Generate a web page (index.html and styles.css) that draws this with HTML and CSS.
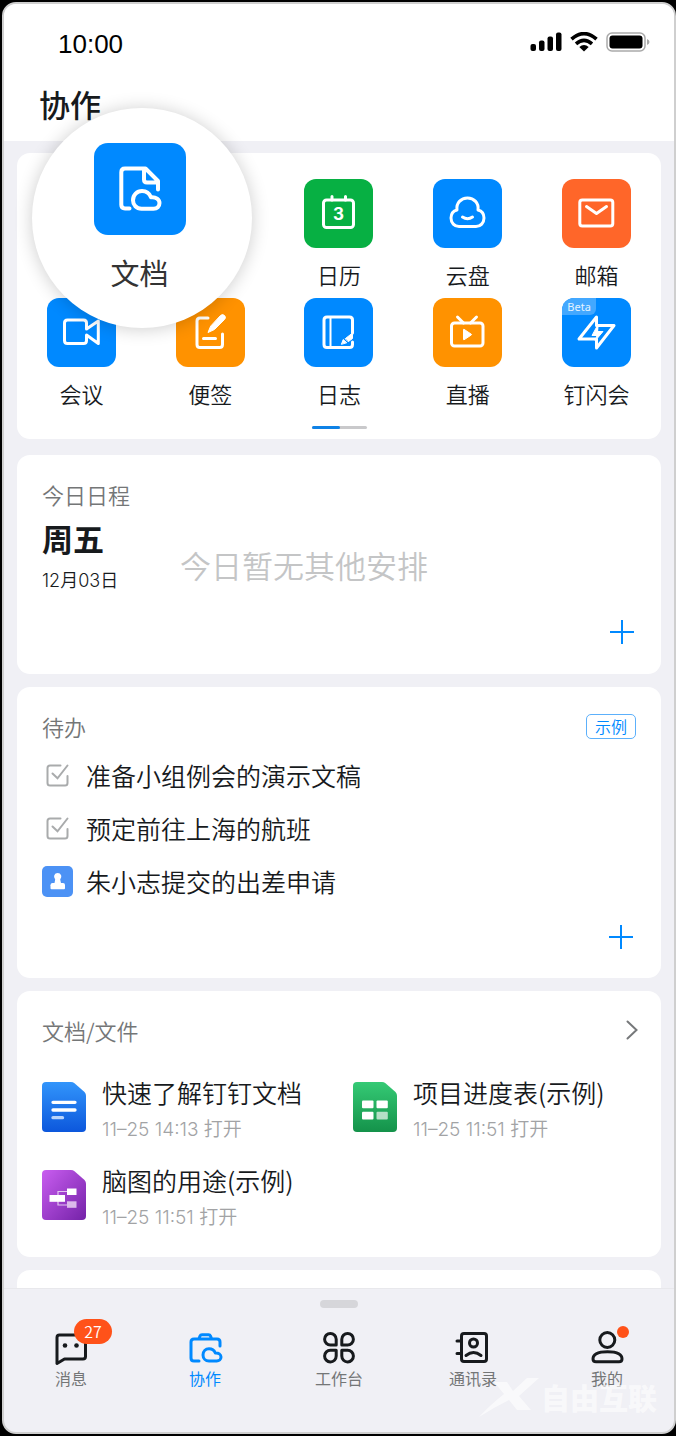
FILE: index.html
```html
<!DOCTYPE html>
<html lang="zh-CN">
<head>
<meta charset="utf-8">
<meta name="viewport" content="width=device-width, initial-scale=1">
<title>协作</title>
<link rel="stylesheet" href="styles.css">
</head>
<body>
<div class="phone">
  <header class="header">
    <div class="status">
      <time class="clock">10:00</time>
      <div class="status-icons">
        <svg width="32" height="20" viewBox="0 0 32 20"><rect x="0.500" y="12" width="5.500" height="7" rx="2"/><rect x="9" y="8.500" width="5.500" height="10.500" rx="2"/><rect x="17.500" y="4.500" width="5.500" height="14.500" rx="2"/><rect x="26" y="0.500" width="5.500" height="18.500" rx="2"/></svg>
        <svg width="28" height="20" viewBox="0 0 28 20"><g fill="none" stroke="#000" stroke-width="3.600"><path d="M1.500 7.200Q14-4 26.500 7.200"/><path d="M6 11.800Q14 4.800 22 11.800"/></g><path d="M9.300 15Q14 11 18.700 15L14 19.500Z"/></svg>
        <svg width="44" height="20" viewBox="0 0 44 20"><rect x="1" y="1" width="38" height="18" rx="5" fill="none" stroke="#aaa" stroke-width="1.500"/><rect x="3.500" y="3.500" width="33" height="13" rx="3"/><path d="M41 7Q43.500 8 43.500 10T41 13Z" fill="#aaa"/></svg>
      </div>
    </div>
    <h1 class="page-title">协作</h1>
  </header>

  <main class="content">
    <section class="card apps">
      <div class="app-grid">
        <button class="app app-third"><span class="tile green"><svg viewBox="0 0 69 69"><rect x="19.500" y="21" width="30" height="27.500" rx="3"/><path d="M28 17.500V21M41.500 17.500V21"/><text x="34.500" y="41" class="day">3</text></svg></span><span class="app-name">日历</span></button>
        <button class="app"><span class="tile blue"><svg viewBox="0 0 69 69"><path d="M24 31C23 24 28 19 34.500 19S46 24 45 31C49 32 51 35.500 51 39C51 44 47.500 47.500 43 47.500H26C21.500 47.500 18 44 18 39C18 35.500 20 32 24 31Z"/><path d="M29.500 38Q34.500 41.500 39.500 38"/></svg></span><span class="app-name">云盘</span></button>
        <button class="app"><span class="tile red"><svg viewBox="0 0 69 69"><rect x="17.800" y="21" width="33" height="26" rx="2.500"/><path d="M24.500 27.500L34.500 34.500L44.500 27.500"/></svg></span><span class="app-name">邮箱</span></button>
        <button class="app"><span class="tile blue"><svg viewBox="0 0 69 69"><path d="M39.500 31V25Q39.500 22 36.500 22H20.500Q17.500 22 17.500 25V42.500Q17.500 45.500 20.500 45.500H36.500Q39.500 45.500 39.500 42.500V37L51.300 45.500V23L39.500 31"/></svg></span><span class="app-name">会议</span></button>
        <button class="app"><span class="tile orange"><svg viewBox="0 0 69 69"><path d="M32 20H24Q21 20 21 23V46.500Q21 49.500 24 49.500H43.500Q46.500 49.500 46.500 46.500V36M27.500 40.500H39.500"/><path class="solid" d="M44.500 17.500Q46.500 15.500 48.500 17.500T48.500 21.500L38.500 31.500L32 34.500L34.500 28.500Z"/></svg></span><span class="app-name">便签</span></button>
        <button class="app"><span class="tile blue"><svg viewBox="0 0 69 69"><path d="M48.500 35V22Q48.500 19 45.500 19H23Q20 19 20 22V46.500Q20 49.500 23 49.500H45.500Q48.500 49.500 48.500 46.500V44"/><path class="thin" d="M26.500 20V49"/><path class="solid" d="M37.500 46L39.200 41.500L42.500 44.500ZM41.500 40.500L48.500 35V40.500L44.500 43.500Z"/></svg></span><span class="app-name">日志</span></button>
        <button class="app"><span class="tile orange"><svg viewBox="0 0 69 69"><rect x="18.500" y="25" width="31.500" height="23" rx="3"/><path d="M24.500 19L30.500 25M43.500 19L37.500 25"/><path class="solid" d="M30.500 31.500Q30.500 31 31 31.300L38.300 36.200Q38.800 36.600 38.300 37L31 41.800Q30.500 42 30.500 41.500Z"/></svg></span><span class="app-name">直播</span></button>
        <button class="app"><span class="tile blue"><svg viewBox="0 0 69 69"><path d="M34.500 19L17 41H34.500V50L52 27.500H34.500Z"/><path class="solid" d="M36 26.500L30 37.500H35L33 43L41 33.500H36Z"/></svg><span class="beta">Beta</span></span><span class="app-name">钉闪会</span></button>
      </div>
      <div class="pager"><span class="pager-current"></span></div>
      <button class="lens">
        <svg class="lens-tile" viewBox="0 0 92 92"><path d="M35.500 65.500H31Q27.300 65.500 27.300 61.800V29.200Q27.300 25.500 31 25.500H51.500L64 38V46.500M50 26V36.500Q50 39.500 53 39.500H63.500"/><path d="M47.500 65.700C42.500 65.700 39 62 39 57.200C39 52 43 48 48 48C52.500 48 55.500 50.500 57 54.300C62 53.800 65.500 56.500 65.500 60C65.500 63.500 63 65.700 59.500 65.700Z"/></svg>
        <span class="lens-name">文档</span>
      </button>
    </section>

    <section class="card schedule">
      <h2 class="card-title">今日日程</h2>
      <div class="day-row">
        <div class="date"><strong class="weekday">周五</strong><span class="month-day">12月03日</span></div>
        <p class="empty">今日暂无其他安排</p>
      </div>
      <button class="add" aria-label="添加日程"><svg viewBox="0 0 26 26"><path d="M13 1V25M1 13H25"/></svg></button>
    </section>

    <section class="card todo">
      <div class="card-head"><h2 class="card-title">待办</h2><span class="sample">示例</span></div>
      <ul class="todo-list">
        <li><label class="todo-item"><span class="check"><input type="checkbox" checked><svg viewBox="0 0 31 31"><path d="M18.500 5.500H8Q5.500 5.500 5.500 8V23Q5.500 25.500 8 25.500H23Q25.500 25.500 25.500 23V16M10.500 13.500L15.500 18.300L25.500 5.500"/></svg></span>准备小组例会的演示文稿</label></li>
        <li><label class="todo-item"><span class="check"><input type="checkbox" checked><svg viewBox="0 0 31 31"><path d="M18.500 5.500H8Q5.500 5.500 5.500 8V23Q5.500 25.500 8 25.500H23Q25.500 25.500 25.500 23V16M10.500 13.500L15.500 18.300L25.500 5.500"/></svg></span>预定前往上海的航班</label></li>
        <li class="todo-item"><svg class="stamp" viewBox="0 0 31 31"><path d="M15.700 7A3.700 3.700 0 0 0 13.200 13.400L12.500 17H10.500Q8.500 17 8.500 19V20H23V19Q23 17 21 17H19L18.200 13.400A3.700 3.700 0 0 0 15.700 7Z"/><rect x="8.500" y="19" width="14.500" height="4.300" rx="1"/></svg>朱小志提交的出差申请</li>
      </ul>
      <button class="add" aria-label="添加待办"><svg viewBox="0 0 26 26"><path d="M13 1V25M1 13H25"/></svg></button>
    </section>

    <section class="card docs">
      <div class="card-head"><h2 class="card-title">文档/文件</h2><button class="more" aria-label="更多"><svg viewBox="0 0 12 20"><path d="M1.500 1.500L10.500 10L1.500 18.500"/></svg></button></div>
      <div class="doc-grid">
        <a class="doc" href="#">
          <svg class="file" viewBox="0 0 44 50"><defs><linearGradient id="fb" x1="0" y1="0" x2="0" y2="1"><stop offset="0" stop-color="#3295fb"/><stop offset="1" stop-color="#0c57dc"/></linearGradient></defs><path fill="url(#fb)" d="M4 0H29Q31 0 32.500 1.300L42.500 10Q44 11.500 44 13.500V46Q44 50 40 50H4Q0 50 0 46V4Q0 0 4 0Z"/><path stroke="#fff" stroke-width="3.300" stroke-linecap="round" d="M11 20.300H33M11 28H33"/><path stroke="#b9d4fb" stroke-width="3.300" stroke-linecap="round" d="M11 35.700H20.500"/></svg>
          <span class="doc-text"><span class="doc-name">快速了解钉钉文档</span><span class="doc-meta">11–25 14:13 打开</span></span>
        </a>
        <a class="doc" href="#">
          <svg class="file" viewBox="0 0 44 50"><defs><linearGradient id="fg" x1="0" y1="0" x2="0" y2="1"><stop offset="0" stop-color="#35ca75"/><stop offset="1" stop-color="#14924a"/></linearGradient></defs><path fill="url(#fg)" d="M4 0H29Q31 0 32.500 1.300L42.500 10Q44 11.500 44 13.500V46Q44 50 40 50H4Q0 50 0 46V4Q0 0 4 0Z"/><g fill="#fff"><rect x="9" y="18.500" width="11.500" height="7.800" rx="1"/><rect x="23.500" y="18.500" width="11.300" height="7.800" rx="1"/><rect x="9" y="29.700" width="11.500" height="7.800" rx="1"/><rect x="23.500" y="29.700" width="11.300" height="7.800" rx="1" fill="#b5dfc6"/></g></svg>
          <span class="doc-text"><span class="doc-name">项目进度表(示例)</span><span class="doc-meta">11–25 11:51 打开</span></span>
        </a>
        <a class="doc" href="#">
          <svg class="file" viewBox="0 0 44 50"><defs><linearGradient id="fp" x1="0" y1="0" x2="1" y2="1"><stop offset="0" stop-color="#c95df0"/><stop offset="1" stop-color="#7422a8"/></linearGradient></defs><path fill="url(#fp)" d="M4 0H29Q31 0 32.500 1.300L42.500 10Q44 11.500 44 13.500V46Q44 50 40 50H4Q0 50 0 46V4Q0 0 4 0Z"/><path fill="none" stroke="#e4c5f2" stroke-width="1.200" d="M25 21.500H16V35H25"/><g fill="#fff"><rect x="7.500" y="25" width="15.500" height="6.800"/><rect x="25" y="18.500" width="9.500" height="6.500"/><rect x="25" y="31.300" width="9.500" height="6.500" fill="#dcb9eb"/></g></svg>
          <span class="doc-text"><span class="doc-name">脑图的用途(示例)</span><span class="doc-meta">11–25 11:51 打开</span></span>
        </a>
      </div>
    </section>

    <section class="card peek"></section>
  </main>

  <nav class="tabbar">
    <div class="handle"></div>
    <div class="tabs">
      <button class="tab"><span class="tab-icon"><svg viewBox="0 0 34 34"><path d="M3 32.500V6.500Q3 4 5.500 4H29Q31.500 4 31.500 6.500V25.500Q31.500 28 29 28H10.500Z"/><g class="dots"><circle cx="11" cy="14.500" r="2.300"/><circle cx="22.500" cy="14.500" r="2.300"/></g></svg><span class="count">27</span></span><span class="tab-name">消息</span></button>
      <button class="tab current"><span class="tab-icon"><svg viewBox="0 0 34 34"><path d="M11 30H6Q3 30 3 27V11Q3 8 6 8H29Q32 8 32 11V15M11 7.500L12 5Q12.500 3.700 14 3.700H20.500Q22 3.700 22.500 5L23.500 7.500"/><path d="M21 30C17.500 30 15 27.300 15 24C15 20.500 17.500 17.800 21 17.800C24.300 17.800 26.300 19.700 27.300 22C30.500 21.700 33 23.300 33 26C33 28.500 31 30 28.700 30Z"/></svg></span><span class="tab-name">协作</span></button>
      <button class="tab"><span class="tab-icon"><svg viewBox="0 0 34 34"><path d="M14.200 14H8.500A5.800 5.800 0 1 1 14.200 8.200ZM19.800 14H25.500A5.800 5.800 0 1 0 19.800 8.200ZM14.200 19.300H8.500A5.800 5.800 0 1 0 14.200 25.100ZM19.800 19.300H25.500A5.800 5.800 0 1 1 19.800 25.100Z"/></svg></span><span class="tab-name">工作台</span></button>
      <button class="tab"><span class="tab-icon"><svg viewBox="0 0 34 34"><rect x="5.500" y="2.500" width="25" height="28" rx="2.500"/><circle cx="17.500" cy="12" r="4"/><path d="M1 10H5.500M1 22.500H5.500M10 24.500Q17.500 18.500 25 24.500"/></svg></span><span class="tab-name">通讯录</span></button>
      <button class="tab"><span class="tab-icon"><svg viewBox="0 0 34 34"><circle cx="17.300" cy="9" r="7.500"/><path d="M3 28Q3 20.800 17.500 20.800T32 28Q32 30.700 29 30.700H6Q3 30.700 3 28Z"/></svg><span class="unread"></span></span><span class="tab-name">我的</span></button>
    </div>
    <div class="watermark"><svg viewBox="0 0 64 42"><path d="M17 6H30L36 15L50 2H62L42 20L54 34H40L32 24Q16 32 2 41Q12 30 27 18Z"/></svg><span>自由互联</span></div>
  </nav>
</div>
</body>
</html>
```
FILE: styles.css
```css
* {
  box-sizing: border-box;
}

body {
  margin: 0;
  padding: 2px 0 2px 2px;
  background: #000;
  color: #171a1d;
  font-family: "Noto Sans CJK SC", sans-serif;
  font-weight: 350;
}

h1, h2, p, ul {
  margin: 0;
  padding: 0;
}

button {
  padding: 0;
  border: 0;
  background: none;
  color: inherit;
  font-family: inherit;
  font-weight: inherit;
  cursor: pointer;
}

svg {
  display: block;
}

.phone {
  display: flex;
  flex-direction: column;
  min-height: calc(100vh - 4px);
  border: 2px solid #cfcfcf;
  border-radius: 14px;
  background: #f0f0f5;
  overflow: hidden;
}

/* Header */
.header {
  padding: 24px 24px 15px 35px;
  background: #fff;
}

.status {
  display: flex;
  justify-content: space-between;
  align-items: center;
  height: 32px;
  padding-left: 19px;
}

.clock {
  color: #000;
  font-family: "Liberation Sans", sans-serif;
  font-size: 26px;
  font-weight: 400;
  line-height: 32px;
}

.status-icons {
  display: flex;
  gap: 8px;
  padding-bottom: 4px;
}

.page-title {
  margin-top: 22px;
  font-size: 31px;
  font-weight: 500;
  line-height: 44px;
}

/* Cards */
.content {
  display: flex;
  flex: 1;
  flex-direction: column;
  gap: 13px;
  padding: 12px 13px 0;
}

.card {
  padding: 23px 25px 25px;
  border-radius: 13px;
  background: #fff;
}

.card-head {
  display: flex;
  justify-content: space-between;
  align-items: center;
}

.card-title {
  color: #747677;
  font-size: 22px;
  font-weight: 350;
  line-height: 32px;
}

.add {
  display: block;
  width: 26px;
  height: 26px;
  margin: 0 1px 0 auto;
}

.add path {
  stroke: #0089ff;
  stroke-width: 2;
}

/* App launcher */
.apps {
  position: relative;
  margin-bottom: 3px;
  padding: 26px 0 10px;
}

.app-grid {
  display: grid;
  grid-template-columns: repeat(5, 1fr);
  row-gap: 8px;
}

.app {
  display: flex;
  flex-direction: column;
  align-items: center;
  gap: 10px;
}

.app-third {
  grid-column-start: 3;
}

.tile {
  position: relative;
  width: 69px;
  height: 69px;
  border-radius: 12px;
  overflow: hidden;
}

.tile svg,
.lens-tile {
  fill: none;
  stroke: #fff;
  stroke-width: 3;
  stroke-linecap: round;
  stroke-linejoin: round;
}

.tile .solid {
  fill: #fff;
  stroke-width: 1;
}

.tile .thin {
  stroke-width: 2;
}

.tile .day {
  fill: #fff;
  stroke: none;
  font-family: Inter, sans-serif;
  font-size: 17px;
  font-weight: 700;
  text-anchor: middle;
}

.green { background: #07b043; }
.blue { background: #0089ff; }
.red { background: #ff6629; }
.orange { background: #ff9200; }

.beta {
  position: absolute;
  top: 0;
  left: 0;
  width: 34px;
  height: 17px;
  border-bottom-right-radius: 6px;
  background: #43a8ff;
  color: #e4f3ff;
  font-family: "Noto Sans", sans-serif;
  font-size: 11px;
  font-weight: 400;
  line-height: 17px;
  text-align: center;
}

.app-name {
  font-size: 22px;
  line-height: 32px;
}

.pager {
  width: 55px;
  height: 3px;
  margin: 17px auto 0;
  border-radius: 2px;
  background: #c9c9cb;
}

.pager-current {
  display: block;
  width: 28px;
  height: 3px;
  border-radius: 2px;
  background: #0f82e6;
}

.lens {
  position: absolute;
  top: -45px;
  left: 15px;
  display: flex;
  flex-direction: column;
  align-items: center;
  gap: 17px;
  width: 220px;
  height: 220px;
  padding: 35px 5px 0 0;
  border-radius: 50%;
  background: #fff;
  box-shadow: 0 1px 18px rgba(0, 0, 0, 0.2);
}

.lens-tile {
  width: 92px;
  height: 92px;
  border-radius: 14px;
  background: #0089ff;
  stroke-width: 4;
}

.lens-name {
  color: #333;
  font-size: 29px;
  font-weight: 400;
  line-height: 40px;
}

/* Schedule */
.schedule {
  padding-bottom: 29px;
}

.day-row {
  display: flex;
  align-items: flex-end;
  margin-top: 6px;
}

.date {
  display: flex;
  flex-direction: column;
  gap: 7px;
  width: 138px;
}

.weekday {
  font-size: 31px;
  font-weight: 700;
  line-height: 44px;
}

.month-day {
  font-family: Inter, "Noto Sans CJK SC", sans-serif;
  font-size: 18px;
  line-height: 28px;
}

.empty {
  color: #c4c5c6;
  font-size: 31px;
  line-height: 60px;
}

.schedule .add {
  margin-top: 24px;
}

/* To-do */
.todo {
  padding-bottom: 28px;
}

.sample {
  padding: 0 8px;
  border: 1px solid #5cb0fb;
  border-radius: 5px;
  color: #0089ff;
  font-size: 16px;
  line-height: 23px;
}

.todo-list {
  margin-top: 7px;
  list-style: none;
}

.todo-item {
  display: flex;
  align-items: center;
  gap: 13px;
  font-size: 25px;
  line-height: 53px;
}

.check {
  display: grid;
  width: 31px;
  height: 31px;
}

.check > * {
  grid-area: 1 / 1;
}

.check input {
  width: 31px;
  height: 31px;
  margin: 0;
  appearance: none;
}

.check svg {
  fill: none;
  stroke: #a9abac;
  stroke-width: 2;
  stroke-linecap: round;
  pointer-events: none;
}

.stamp {
  width: 31px;
  height: 31px;
  border-radius: 5px;
  background: #4c92f5;
  fill: #fff;
}

.todo .add {
  margin-top: 16px;
  margin-right: 2px;
}

/* Documents */
.docs {
  padding-right: 23px;
}

.more {
  width: 12px;
  height: 20px;
}

.more path {
  fill: none;
  stroke: #76787a;
  stroke-width: 2;
  stroke-linecap: round;
}

.doc-grid {
  display: grid;
  grid-template-columns: 1fr 1fr;
  gap: 18px 26px;
  margin-top: 28px;
}

.doc {
  display: flex;
  gap: 16px;
  color: inherit;
  text-decoration: none;
}

.file {
  flex: none;
  width: 44px;
  height: 50px;
  margin-top: 8px;
}

.doc-text {
  display: flex;
  flex-direction: column;
  gap: 6px;
  white-space: nowrap;
}

.doc-name {
  font-size: 25px;
  line-height: 36px;
}

.doc-meta {
  color: #a2a3a5;
  font-family: Inter, "Noto Sans CJK SC", sans-serif;
  font-size: 19px;
  line-height: 28px;
}

.peek {
  flex: 1;
  min-height: 18px;
  padding: 0;
  border-radius: 13px 13px 0 0;
}

/* Tab bar */
.tabbar {
  position: relative;
  padding: 11px 0 42px;
  border-top: 1px solid #e8e8ec;
}

.handle {
  width: 38px;
  height: 8px;
  margin: 0 auto 23px;
  border-radius: 4px;
  background: #d6d6da;
}

.tabs {
  display: grid;
  grid-template-columns: repeat(5, 1fr);
}

.tab {
  display: flex;
  flex-direction: column;
  align-items: center;
  gap: 1px;
}

.tab-icon {
  position: relative;
  width: 34px;
  height: 34px;
}

.tab-icon svg {
  overflow: visible;
  fill: none;
  stroke: #171a1d;
  stroke-width: 3;
  stroke-linecap: round;
  stroke-linejoin: round;
}

.tab-icon .dots {
  fill: #171a1d;
  stroke: none;
}

.tab-name {
  color: #747677;
  font-size: 16px;
  font-weight: 400;
  line-height: 24px;
}

.tab.current svg {
  stroke: #0089ff;
}

.current .tab-name {
  color: #0089ff;
}

.count {
  position: absolute;
  top: -12px;
  left: 20px;
  width: 38px;
  height: 25px;
  border-radius: 13px;
  background: #ff5219;
  color: #fff;
  font-size: 16px;
  line-height: 25px;
}

.unread {
  position: absolute;
  top: -5px;
  right: -5px;
  width: 12px;
  height: 12px;
  border-radius: 50%;
  background: #ff5219;
}

.watermark {
  position: absolute;
  right: 17px;
  bottom: 14px;
  display: flex;
  align-items: center;
  color: rgba(255, 255, 255, 0.6);
  font-size: 29px;
  font-weight: 900;
  line-height: 28px;
  pointer-events: none;
}

.watermark svg {
  width: 64px;
  height: 42px;
  fill: currentColor;
}
```
